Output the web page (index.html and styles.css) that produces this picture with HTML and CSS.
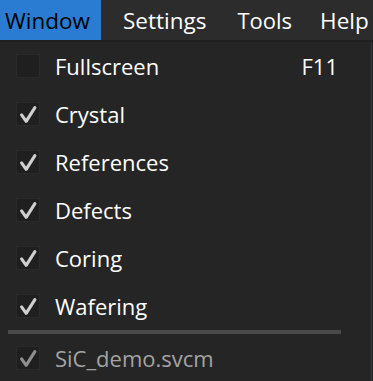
FILE: index.html
```html
<!DOCTYPE html>
<html>
<head>
<meta charset="utf-8">
<link rel="stylesheet" href="styles.css">
</head>
<body>
<div class="menubar">
  <div class="mb-item mb-window active">Window</div>
  <div class="mb-item mb-settings">Settings</div>
  <div class="mb-item mb-tools">Tools</div>
  <div class="mb-item mb-help">Help</div>
</div>
<div class="panel">
  <div class="row">
    <span class="box"></span>
    <span class="label">Fullscreen</span>
    <span class="shortcut">F11</span>
  </div>
  <div class="row">
    <span class="box"><svg viewBox="0 0 24 24" class="check"><polyline points="5,13 10,20 19.5,5"/></svg></span>
    <span class="label">Crystal</span>
  </div>
  <div class="row">
    <span class="box"><svg viewBox="0 0 24 24" class="check"><polyline points="5,13 10,20 19.5,5"/></svg></span>
    <span class="label">References</span>
  </div>
  <div class="row">
    <span class="box"><svg viewBox="0 0 24 24" class="check"><polyline points="5,13 10,20 19.5,5"/></svg></span>
    <span class="label">Defects</span>
  </div>
  <div class="row">
    <span class="box"><svg viewBox="0 0 24 24" class="check"><polyline points="5,13 10,20 19.5,5"/></svg></span>
    <span class="label">Coring</span>
  </div>
  <div class="row">
    <span class="box"><svg viewBox="0 0 24 24" class="check"><polyline points="5,13 10,20 19.5,5"/></svg></span>
    <span class="label">Wafering</span>
  </div>
  <div class="separator"></div>
  <div class="row disabled">
    <span class="box"><svg viewBox="0 0 24 24" class="check"><polyline points="5,13 10,20 19.5,5"/></svg></span>
    <span class="label">SiC_demo.svcm</span>
  </div>
</div>
</body>
</html>
```

FILE: styles.css
```css
html, body {
  margin: 0;
  padding: 0;
  background: #252525;
  font-family: "Open Sans", "Noto Sans", sans-serif;
  font-size: 22px;
  color: #ffffff;
  overflow: hidden;
}
.menubar {
  display: flex;
  height: 40px;
  background: #2c2c2c;
  border-bottom: 2px solid #1f1f1f;
}
.mb-item {
  display: flex;
  align-items: center;
  padding: 0 5px;
  height: 40px;
  color: #ffffff;
  font-size: 22.5px;
  white-space: nowrap;
}
.mb-window {
  padding-right: 11px;
  margin-right: 17px;
}
.mb-settings {
  margin-right: 21px;
}
.mb-tools {
  font-size: 22px;
  margin-right: 18px;
}
.mb-help {
  font-size: 22.5px;
}
.mb-item.active {
  background: #2a7bd2;
  color: #000000;
}
.panel {
  width: 371px;
  border-right: 1px solid #2f363c;
  background: #252525;
}
.row {
  display: flex;
  align-items: center;
  height: 48px;
  padding-left: 16px;
}
.box {
  width: 24px;
  height: 24px;
  box-sizing: border-box;
  background: #1f1f1f;
  border: 1px solid #2a2a2a;
  display: flex;
  align-items: center;
  justify-content: center;
}
.check {
  width: 24px;
  height: 24px;
}
.check polyline {
  fill: none;
  stroke: #d0d0d0;
  stroke-width: 3.4;
  stroke-linecap: round;
  stroke-linejoin: round;
}
.label {
  margin-left: 15px;
  flex: 1;
}
.shortcut {
  margin-right: 33px;
}
.separator {
  height: 4px;
  margin: 0 30px 0 8px;
  background: #4a4a4a;
}
.disabled .label {
  color: #a3a3a3;
}
.disabled .check polyline {
  stroke: #8f8f8f;
}
```
